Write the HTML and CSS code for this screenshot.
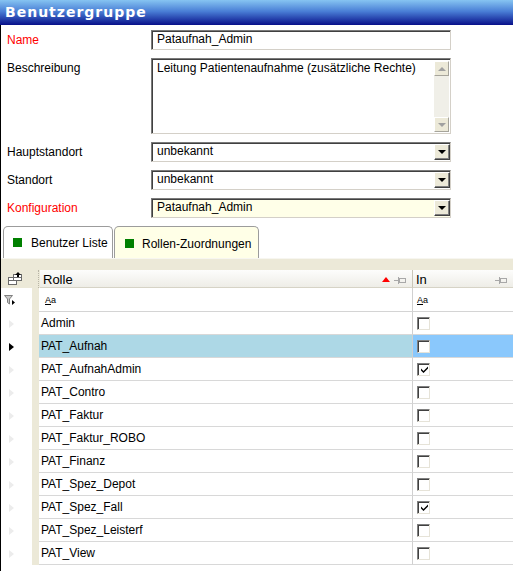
FILE: index.html
```html
<!DOCTYPE html>
<html lang="de">
<head>
    <meta charset="UTF-8">
    <title>Benutzergruppe</title>
    <link rel="stylesheet" href="styles.css">
</head>
<body>
<div class="window">
    <div class="titlebar">Benutzergruppe</div>

    <div class="content">
        <div class="form">
            <label class="req">Name</label>
            <div class="edit">Pataufnah_Admin</div>

            <label>Beschreibung</label>
            <div class="edit memo">
                <span>Leitung Patientenaufnahme (zusätzliche Rechte)</span>
                <div class="vscroll">
                    <span class="sbtn"><i class="tri-up"></i></span>
                    <span class="sbtn"><i class="tri-down grey"></i></span>
                </div>
            </div>

            <label>Hauptstandort</label>
            <div class="edit combo">unbekannt<span class="dd"><i class="tri-down"></i></span></div>

            <label>Standort</label>
            <div class="edit combo">unbekannt<span class="dd"><i class="tri-down"></i></span></div>

            <label class="req">Konfiguration</label>
            <div class="edit combo yellow">Pataufnah_Admin<span class="dd"><i class="tri-down"></i></span></div>
        </div>

        <div class="tabs">
            <div class="tab"><span class="sq"></span>Benutzer Liste</div>
            <div class="tab active"><span class="sq"></span>Rollen-Zuordnungen</div>
        </div>

        <div class="grid">
            <div class="band"></div>

            <div class="grow head">
                <div class="g-corner">
                    <svg width="16" height="16" viewBox="0 0 16 16">
                        <rect x="1.5" y="6.5" width="8" height="7" fill="#fff" stroke="#6a6a6a"/>
                        <line x1="1.5" y1="9.5" x2="9.5" y2="9.5" stroke="#6a6a6a"/>
                        <rect x="6.5" y="3.5" width="8" height="6" fill="#fff" stroke="#6a6a6a"/>
                        <line x1="6.5" y1="6.5" x2="14.5" y2="6.5" stroke="#6a6a6a"/>
                        <path d="M11 1 L14 4 L12 4 L12 6 L10 6 L10 4 L8 4 Z" fill="#000"/>
                    </svg>
                </div>
                <div class="g-rolle">Rolle<span class="sort"></span><span class="pin"><svg width="12" height="8" viewBox="0 0 12 8"><path d="M0 4.5 H4 M4.5 1 V8" stroke="#a8a8a8"/><rect x="5.5" y="2.5" width="6" height="4" fill="none" stroke="#a8a8a8"/></svg></span></div>
                <div class="g-in">In<span class="pin"><svg width="12" height="8" viewBox="0 0 12 8"><path d="M0 4.5 H4 M4.5 1 V8" stroke="#a8a8a8"/><rect x="5.5" y="2.5" width="6" height="4" fill="none" stroke="#a8a8a8"/></svg></span></div>
            </div>

            <div class="grow filter">
                <div class="g-sel">
                    <svg width="12" height="12" viewBox="0 0 12 12">
                        <path d="M0.5 1.5 H8.5 L5.5 5 V10 L3.5 8.5 V5 Z" fill="#c8c8c8" stroke="#808080"/>
                        <path d="M8 6 L11 8.5 L8 11 Z" fill="#000"/>
                    </svg>
                </div>
                <div class="g-strip"></div>
                <div class="g-rolle"><span class="aa"><u>A</u>a</span></div>
                <div class="g-in"><span class="aa"><u>A</u>a</span></div>
            </div>

            <div id="rows"></div>
        </div>
    </div>
</div>

<script>
    const rollen = [
        ["Admin", false],
        ["PAT_Aufnah", false],
        ["PAT_AufnahAdmin", true],
        ["PAT_Contro", false],
        ["PAT_Faktur", false],
        ["PAT_Faktur_ROBO", false],
        ["PAT_Finanz", false],
        ["PAT_Spez_Depot", false],
        ["PAT_Spez_Fall", true],
        ["PAT_Spez_Leisterf", false],
        ["PAT_View", false]
    ];
    const aktiv = 1;

    document.getElementById("rows").innerHTML = rollen.map((r, i) => `
        <div class="grow data ${i === aktiv ? "selected" : ""}">
            <div class="g-sel"><i class="marker"></i></div>
            <div class="g-strip"></div>
            <div class="g-rolle">${r[0]}</div>
            <div class="g-in"><span class="chk">${r[1] ? '<svg width="9" height="9" viewBox="0 0 9 9"><path d="M1 3.5 L3.5 6 L8 1.5 L8 3.5 L3.5 8 L1 5.5 Z" fill="#000"/></svg>' : ''}</span></div>
        </div>
    `).join('');
</script>
</body>
</html>
```

FILE: styles.css
```css
* {
    box-sizing: border-box;
}

body {
    margin: 0;
    background: white;
    font-family: "Liberation Sans", Arial, sans-serif;
    font-size: 12px;
    color: black;
}

.window {
    width: 513px;
    height: 571px;
    overflow: hidden;
}

.titlebar {
    height: 25px;
    padding-left: 5px;
    line-height: 25px;
    background: linear-gradient(#86c4f2, #4a7fd6 45%, #08108a);
    color: white;
    font-family: "DejaVu Sans", Verdana, sans-serif;
    font-weight: bold;
    font-size: 14px;
    letter-spacing: 1px;
}

.content {
    height: 546px;
    border-left: 1px solid black;
}

/* formular */

.form {
    display: grid;
    grid-template-columns: 144px 300px;
    row-gap: 8px;
    padding: 5px 0 0 6px;
}

.form label {
    padding-top: 3px;
}

.form label.req {
    color: #f00;
}

.edit {
    position: relative;
    height: 20px;
    padding-left: 5px;
    line-height: 17px;
    background: white;
    border: 1px solid;
    border-color: #7a7a7a #d4d0c8 #d4d0c8 #7a7a7a;
    box-shadow: inset 1px 1px 0 #404040;
    white-space: nowrap;
}

.edit.memo {
    height: 76px;
    padding-top: 2px;
    line-height: 14px;
}

.edit.yellow {
    background: #ffffe8;
}

.vscroll {
    position: absolute;
    top: 2px;
    right: 1px;
    bottom: 1px;
    width: 15px;
    display: flex;
    flex-direction: column;
    justify-content: space-between;
    background: #f0efe8;
}

.sbtn {
    height: 15px;
    display: flex;
    justify-content: center;
    align-items: center;
    background: #ece9d8;
    border: 1px solid;
    border-color: #fff #a6a49b #a6a49b #fff;
}

.dd {
    position: absolute;
    top: 1px;
    right: 0;
    width: 16px;
    height: 16px;
    display: flex;
    justify-content: center;
    align-items: center;
    background: #ece9d8;
    border: 1px solid;
    border-color: #fff #404040 #404040 #fff;
    box-shadow: inset -1px -1px 0 #808080;
}

.tri-down {
    width: 0;
    height: 0;
    border-left: 4px solid transparent;
    border-right: 4px solid transparent;
    border-top: 4px solid #000;
}

.tri-down.grey {
    border-top-color: #a0a0a0;
}

.tri-up {
    width: 0;
    height: 0;
    border-left: 4px solid transparent;
    border-right: 4px solid transparent;
    border-bottom: 4px solid #a0a0a0;
}

/* tabs */

.tabs {
    display: flex;
    gap: 1px;
    margin-top: 8px;
    padding-left: 2px;
}

.tab {
    height: 32px;
    width: 110px;
    display: flex;
    align-items: center;
    padding: 0 0 0 9px;
    border: 1px solid #9c9c9c;
    border-bottom: none;
    border-radius: 5px 5px 0 0;
    background: white;
}

.tab.active {
    width: 145px;
    padding: 2px 0 0 10px;
    background: #ffffe7;
}

.sq {
    width: 9px;
    height: 9px;
    margin-right: 9px;
    background: #008000;
}

.tab.active .sq {
    margin-right: 8px;
}

/* grid */

.band {
    height: 12px;
    background: #ece9d8;
    border-top: 1px solid #f7f6f0;
}

.grow {
    display: flex;
}

.g-sel {
    width: 31px;
    display: flex;
    align-items: center;
    padding-left: 3px;
}

.g-strip {
    width: 7px;
    background: #ece9d8;
}

.g-rolle {
    width: 374px;
    display: flex;
    align-items: center;
    padding-left: 3px;
    border-right: 1px solid #d0d0d0;
}

.g-in {
    flex: 1;
    display: flex;
    align-items: center;
    padding-left: 4px;
}

.head {
    height: 18px;
    background: #ece9d8;
}

.g-corner {
    width: 38px;
    padding: 0 0 0 6px;
    display: flex;
    align-items: center;
    border-right: 1px dotted #b8b5a6;
    margin-right: 1px;
}

.head .g-rolle,
.head .g-in {
    padding-left: 3px;
    padding-top: 2px;
    font-size: 13px;
    background: linear-gradient(#fdfdfc, #eeede7);
    border-bottom: 1px solid #d6d3c6;
}

.head .g-rolle {
    width: 373px;
    border-right: 1px solid #c9c6b8;
}

.sort {
    margin-left: auto;
    width: 0;
    height: 0;
    border-left: 4px solid transparent;
    border-right: 4px solid transparent;
    border-bottom: 5px solid #f00;
}

.head .g-rolle .pin {
    margin: 0 6px 0 4px;
}

.head .g-in .pin {
    margin: 0 6px 0 auto;
}

.pin svg {
    display: block;
}

.filter {
    height: 24px;
}

.filter .g-rolle,
.filter .g-in {
    border-bottom: 1px solid #d4d4d4;
}

.filter .g-rolle {
    padding-left: 6px;
}

.aa {
    font-size: 9px;
}

.data {
    height: 23px;
}

.data .g-rolle,
.data .g-in {
    border-bottom: 1px solid #d8d8d8;
    padding-left: 2px;
}

.data .g-in {
    padding-left: 4px;
}

.marker {
    margin-left: 5px;
    width: 0;
    height: 0;
    border-top: 4px solid transparent;
    border-bottom: 4px solid transparent;
    border-left: 5px solid #ececec;
}

.data.selected .marker {
    border-left-color: #000;
}

.data.selected .g-rolle {
    background: #add8e6;
}

.data.selected .g-in {
    background: #8ac8fc;
}

.chk {
    width: 13px;
    height: 13px;
    display: flex;
    justify-content: center;
    align-items: center;
    background: white;
    border: 1px solid;
    border-color: #808080 #e6e3d8 #e6e3d8 #808080;
    box-shadow: inset 1px 1px 0 #404040;
}

.chk svg {
    margin: 1px 0 0 1px;
}
```
